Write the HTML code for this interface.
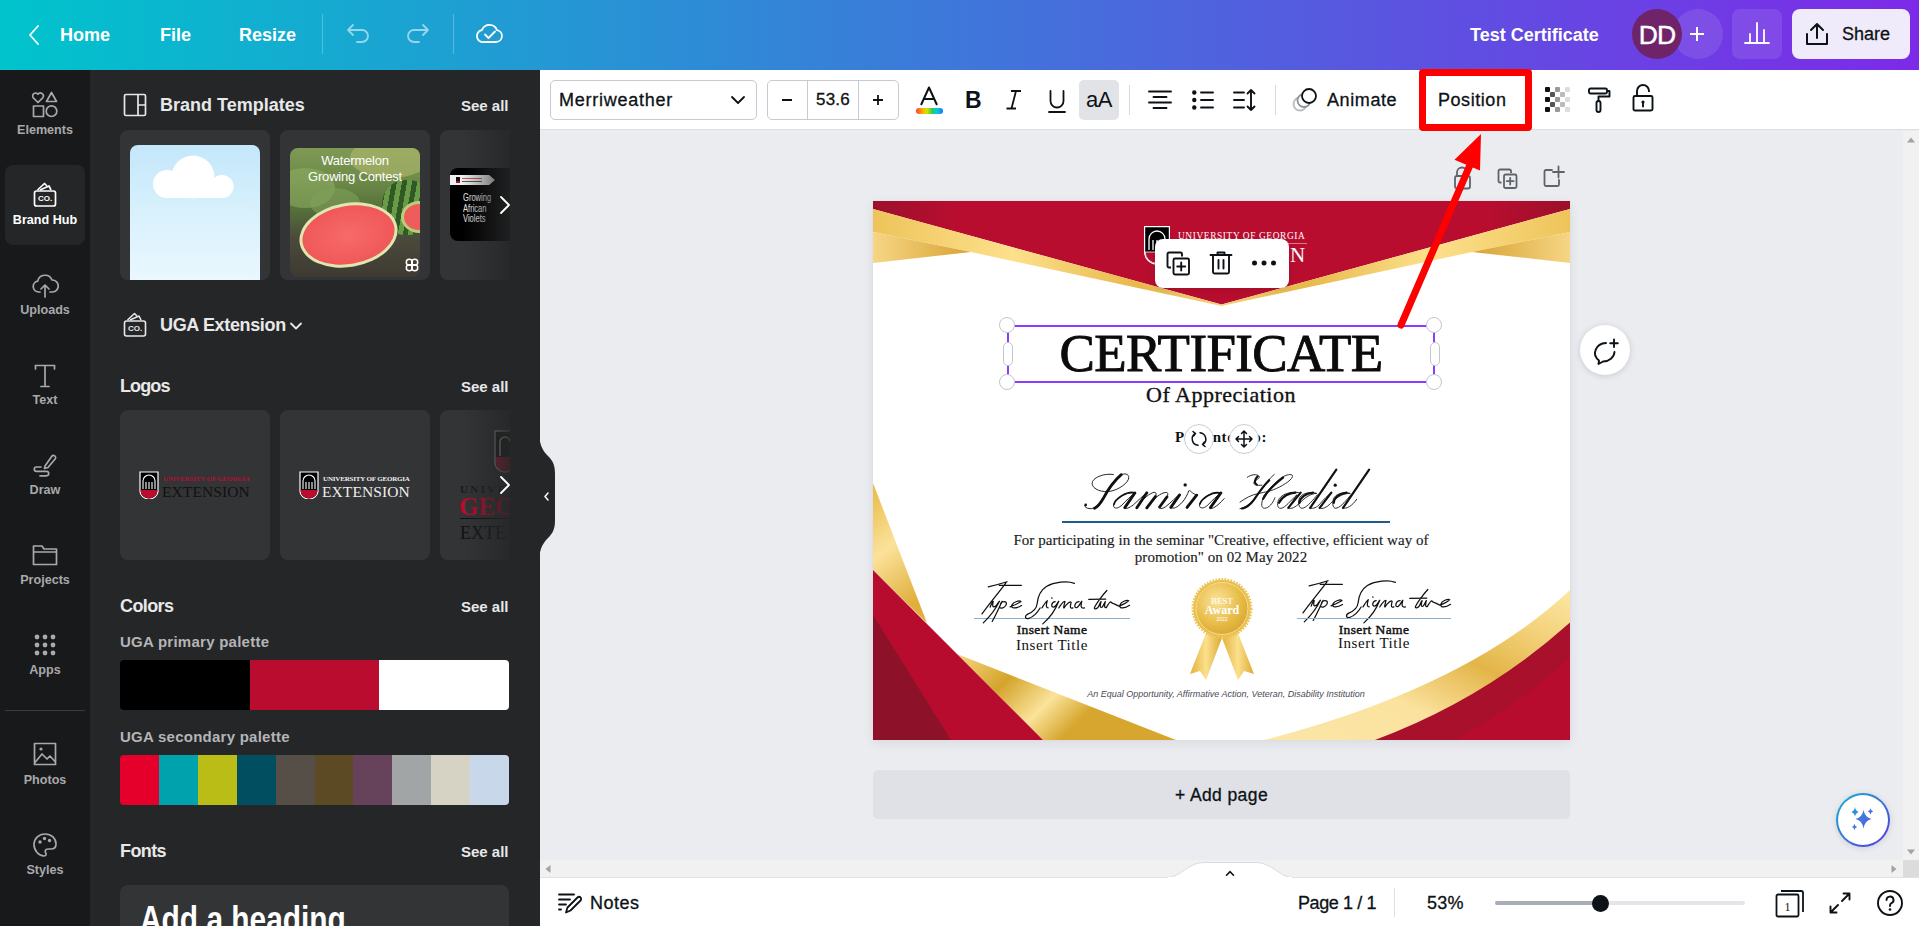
<!DOCTYPE html>
<html><head><meta charset="utf-8">
<style>
*{box-sizing:border-box;margin:0;padding:0}
html,body{width:1919px;height:926px;overflow:hidden;background:#ebecf0;font-family:"Liberation Sans",sans-serif}
.a{position:absolute}
.hdr{left:0;top:0;width:1919px;height:70px;background:linear-gradient(90deg,#00c4cc 0%,#7d2ae8 100%)}
.ht{color:#fff;font-weight:bold;font-size:18px;line-height:22px;white-space:nowrap}
.rail{left:0;top:70px;width:90px;height:856px;background:#18191b}
.ri{left:0;width:90px;text-align:center;color:#a8a9ab;font-weight:bold;font-size:12.6px;white-space:nowrap;margin-top:1px}
.panel{left:90px;top:70px;width:450px;height:856px;background:#252627;overflow:hidden}
.pt{color:#e8e8e9;font-weight:bold;font-size:18px;white-space:nowrap;line-height:20px}
.sa{color:#e8e8e9;font-weight:bold;font-size:15px;white-space:nowrap;line-height:21px}
.card{width:150px;height:150px;background:#333436;border-radius:8px;overflow:hidden}
.tb{left:540px;top:70px;width:1379px;height:60px;background:#fff;border-bottom:1px solid #dcdee3}
.tt{color:#0d1216;font-size:18px;white-space:nowrap;line-height:20px;-webkit-text-stroke:.3px #0d1216}
.bot{left:540px;top:877px;width:1379px;height:49px;background:#fff;border-top:1px solid #dfe1e5}
.serif{font-family:"Liberation Serif",serif}
</style></head><body>

<!-- HEADER -->
<div class="a hdr"></div>
<svg class="a" style="left:26px;top:24px" width="16" height="22" viewBox="0 0 16 22"><path d="M12 2 L4 11 L12 20" fill="none" stroke="#fff" stroke-width="1.8" stroke-linecap="round" stroke-linejoin="round"/></svg>
<div class="a ht" style="left:60px;top:24px">Home</div>
<div class="a ht" style="left:160px;top:24px">File</div>
<div class="a ht" style="left:239px;top:24px">Resize</div>
<div class="a" style="left:322px;top:14px;width:1px;height:40px;background:rgba(255,255,255,.25)"></div>
<svg class="a" style="left:346px;top:22px" width="26" height="22" viewBox="0 0 26 22"><path d="M7 3 L2 8 L7 13 M2 8 H16 a6 6 0 0 1 0 12 H11" fill="none" stroke="rgba(255,255,255,.55)" stroke-width="1.8" stroke-linecap="round" stroke-linejoin="round"/></svg>
<svg class="a" style="left:404px;top:22px" width="26" height="22" viewBox="0 0 26 22"><path d="M19 3 L24 8 L19 13 M24 8 H10 a6 6 0 0 0 0 12 H15" fill="none" stroke="rgba(255,255,255,.55)" stroke-width="1.8" stroke-linecap="round" stroke-linejoin="round"/></svg>
<div class="a" style="left:453px;top:14px;width:1px;height:40px;background:rgba(255,255,255,.25)"></div>
<svg class="a" style="left:476px;top:22px" width="28" height="22" viewBox="0 0 28 22"><path d="M8 20 H20 a6 6 0 0 0 1-11.9 A8 8 0 0 0 6 8 a6 6 0 0 0 2 12 Z" fill="none" stroke="#fff" stroke-width="1.8" stroke-linejoin="round"/><path d="M9 12.5 L12.5 16 L19 9.5" fill="none" stroke="#fff" stroke-width="1.8" stroke-linecap="round" stroke-linejoin="round"/></svg>

<div class="a ht" style="left:1470px;top:24px">Test Certificate</div>
<div class="a" style="left:1673px;top:9px;width:50px;height:50px;border-radius:50%;background:rgba(255,255,255,.1)"></div>
<div class="a" style="left:1632px;top:9px;width:50px;height:50px;border-radius:50%;background:#6f2368;color:#fff;font-size:26.5px;line-height:53px;text-align:center;letter-spacing:-.8px;-webkit-text-stroke:.4px #fff">DD</div>
<svg class="a" style="left:1689px;top:26px" width="16" height="16" viewBox="0 0 16 16"><path d="M8 1 V15 M1 8 H15" stroke="#fff" stroke-width="2"/></svg>
<div class="a" style="left:1732px;top:9px;width:50px;height:50px;border-radius:8px;background:rgba(255,255,255,.1)"></div>
<svg class="a" style="left:1744px;top:22px" width="26" height="22" viewBox="0 0 26 22"><path d="M1 21 H25 M6 21 V12 M13 21 V1 M20 21 V8" stroke="#fff" stroke-width="1.8" stroke-linecap="round"/></svg>
<div class="a" style="left:1792px;top:9px;width:118px;height:50px;border-radius:8px;background:#f0ebfb"></div>
<svg class="a" style="left:1805px;top:22px" width="24" height="24" viewBox="0 0 24 24"><path d="M2 12 V22 H22 V12 M12 16 V2 M6 8 L12 2 L18 8" fill="none" stroke="#0d1216" stroke-width="2" stroke-linecap="round" stroke-linejoin="round"/></svg>
<div class="a tt" style="left:1842px;top:24px;font-size:18px">Share</div>

<!-- RAIL -->
<div class="a rail"></div>
<!-- Elements -->
<svg class="a" style="left:31px;top:91px" width="28" height="28" viewBox="0 0 28 28" fill="none" stroke="#a8a9ab" stroke-width="1.7" stroke-linejoin="round">
<path d="M7 11.5 L2.3 6.8 a2.9 2.9 0 0 1 4.7-3.6 a2.9 2.9 0 0 1 4.7 3.6 Z"/>
<path d="M20.5 1.5 L25.5 10.5 H15.5 Z"/>
<rect x="2.5" y="15" width="10" height="10.5"/>
<circle cx="20.5" cy="20.2" r="5.3"/>
</svg>
<div class="a ri" style="top:120px;line-height:18px">Elements</div>
<!-- Brand hub -->
<div class="a" style="left:5px;top:165px;width:80px;height:80px;border-radius:8px;background:#252627"></div>
<svg class="a" style="left:33px;top:181px" width="24" height="27" viewBox="0 0 24 27" fill="none" stroke="#fff" stroke-width="1.7" stroke-linejoin="round">
<path d="M4.5 9 L11.5 2.5 L14 5"/><path d="M7 9 L16 5 L18 9"/>
<rect x="1.5" y="10" width="21" height="15" rx="2"/>
</svg>
<div class="a" style="left:33px;top:189px;width:24px;text-align:center;color:#fff;font:bold 8px 'Liberation Sans';line-height:10px;top:194px">CO.</div>
<div class="a ri" style="top:210px;line-height:18px;color:#fff">Brand Hub</div>
<!-- Uploads -->
<svg class="a" style="left:31px;top:272px" width="28" height="28" viewBox="0 0 28 28" fill="none" stroke="#a8a9ab" stroke-width="1.7" stroke-linecap="round" stroke-linejoin="round">
<path d="M9 20 H7.5 a5.5 5.5 0 0 1-.8-10.9 A7.5 7.5 0 0 1 21 8 a5.8 5.8 0 0 1 .5 12 H19"/>
<path d="M14 25 V13 M10 17 L14 13 L18 17"/>
</svg>
<div class="a ri" style="top:300px;line-height:18px">Uploads</div>
<!-- Text -->
<svg class="a" style="left:33px;top:363px" width="24" height="26" viewBox="0 0 24 26" fill="none" stroke="#a8a9ab" stroke-width="1.7" stroke-linecap="round">
<path d="M2.5 6 V2.5 H21.5 V6 M12 2.5 V23.5 M8 23.5 H16"/>
</svg>
<div class="a ri" style="top:390px;line-height:18px">Text</div>
<!-- Draw -->
<svg class="a" style="left:32px;top:452px" width="26" height="26" viewBox="0 0 26 26" fill="none" stroke="#a8a9ab" stroke-width="1.7" stroke-linecap="round" stroke-linejoin="round">
<path d="M13 14 L20 4 a2.2 2.2 0 0 1 3.5 2.5 L16 15.5 L12.5 16.5 Z"/>
<path d="M9 15 H4.5 a2.2 2.2 0 0 0 0 4.4 H14.5 a2.2 2.2 0 0 1 0 4.4 H8"/>
</svg>
<div class="a ri" style="top:480px;line-height:18px">Draw</div>
<!-- Projects -->
<svg class="a" style="left:31px;top:543px" width="28" height="24" viewBox="0 0 28 24" fill="none" stroke="#a8a9ab" stroke-width="1.7" stroke-linejoin="round">
<path d="M2.5 3 H11 L13 6 H25.5 V21.5 H2.5 Z M2.5 9 H25.5"/>
</svg>
<div class="a ri" style="top:570px;line-height:18px">Projects</div>
<!-- Apps -->
<svg class="a" style="left:33px;top:633px" width="24" height="24" viewBox="0 0 24 24" fill="#a8a9ab">
<circle cx="4" cy="4" r="2.4"/><circle cx="12" cy="4" r="2.4"/><circle cx="20" cy="4" r="2.4"/>
<circle cx="4" cy="12" r="2.4"/><circle cx="12" cy="12" r="2.4"/><circle cx="20" cy="12" r="2.4"/>
<circle cx="4" cy="20" r="2.4"/><circle cx="12" cy="20" r="2.4"/><circle cx="20" cy="20" r="2.4"/>
</svg>
<div class="a ri" style="top:660px;line-height:18px">Apps</div>
<div class="a" style="left:5px;top:710px;width:80px;height:1px;background:#3a3b3d"></div>
<!-- Photos -->
<svg class="a" style="left:33px;top:742px" width="24" height="24" viewBox="0 0 24 24" fill="none" stroke="#a8a9ab" stroke-width="1.7" stroke-linejoin="round">
<rect x="1.5" y="1.5" width="21" height="21"/><path d="M1.5 21 L9 12 L14 17 L17 14 L22.5 20"/><circle cx="8" cy="7" r="1.6" fill="#a8a9ab" stroke="none"/>
</svg>
<div class="a ri" style="top:770px;line-height:18px">Photos</div>
<!-- Styles -->
<svg class="a" style="left:32px;top:832px" width="26" height="26" viewBox="0 0 26 26" fill="none" stroke="#a8a9ab" stroke-width="1.7" stroke-linejoin="round">
<path d="M13 2 C6.5 2 2 6.8 2 12.5 C2 18.5 6.8 24 12 24 C14.2 24 14.6 22.5 13.6 20.8 C12.6 19 13.6 17 15.8 17 H19 C22 17 24 15 24 12 C24 6.5 19.5 2 13 2 Z"/>
<circle cx="8" cy="10" r="1.7" fill="#a8a9ab" stroke="none"/><circle cx="12.5" cy="6.5" r="1.7" fill="#a8a9ab" stroke="none"/><circle cx="17.5" cy="8.5" r="1.7" fill="#a8a9ab" stroke="none"/>
</svg>
<div class="a ri" style="top:860px;line-height:18px">Styles</div>


<!-- TOOLBAR -->
<div class="a tb"></div>
<div class="a" style="left:550px;top:80px;width:207px;height:40px;border:1px solid #c7cad0;border-radius:5px"></div>
<div class="a tt" style="left:559px;top:90px;font-size:18px;letter-spacing:.75px">Merriweather</div>
<svg class="a" style="left:730px;top:94px" width="16" height="12" viewBox="0 0 16 12"><path d="M2 3 L8 9 L14 3" fill="none" stroke="#0d1216" stroke-width="1.8" stroke-linecap="round" stroke-linejoin="round"/></svg>
<div class="a" style="left:767px;top:80px;width:132px;height:40px;border:1px solid #c7cad0;border-radius:5px"></div>
<div class="a" style="left:807px;top:81px;width:1px;height:38px;background:#c7cad0"></div>
<div class="a" style="left:858px;top:81px;width:1px;height:38px;background:#c7cad0"></div>
<div class="a" style="left:782px;top:99px;width:10px;height:2px;background:#0d1216"></div>
<div class="a tt" style="left:816px;top:90px;font-size:17px;letter-spacing:.2px">53.6</div>
<svg class="a" style="left:872px;top:94px" width="12" height="12" viewBox="0 0 12 12"><path d="M6 1 V11 M1 6 H11" stroke="#0d1216" stroke-width="1.8"/></svg>
<svg class="a" style="left:914px;top:86px" width="30" height="29" viewBox="0 0 30 29"><path d="M7 19 L15 1.5 L23 19 M10 13 H20" fill="none" stroke="#0d1216" stroke-width="2" stroke-linejoin="round"/><defs><linearGradient id="rb" x1="0" x2="1"><stop offset="0" stop-color="#ff3b2f"/><stop offset=".2" stop-color="#ff9f0a"/><stop offset=".4" stop-color="#d7e500"/><stop offset=".6" stop-color="#34c759"/><stop offset=".8" stop-color="#00c7f0"/><stop offset="1" stop-color="#1d6ff2"/></linearGradient></defs><rect x="2" y="22" width="27" height="6" rx="3" fill="url(#rb)"/></svg>
<div class="a" style="left:965px;top:88px;color:#0d1216;font:bold 23px 'Liberation Sans';line-height:24px">B</div>
<svg class="a" style="left:1005px;top:90px" width="18" height="20" viewBox="0 0 18 20"><path d="M6 1 H16 M1.5 18.5 H11 M11 1 L6.5 18.5" fill="none" stroke="#0d1216" stroke-width="1.8"/></svg>
<svg class="a" style="left:1048px;top:90px" width="18" height="24" viewBox="0 0 18 24"><path d="M2.5 1 V11 a6.5 6.5 0 0 0 13 0 V1 M1 22 H17" fill="none" stroke="#0d1216" stroke-width="1.8" stroke-linecap="round"/></svg>
<div class="a" style="left:1079px;top:80px;width:40px;height:40px;border-radius:5px;background:#e1e3e7"></div>
<div class="a" style="left:1079px;top:88px;width:40px;text-align:center;color:#0d1216;font-size:22px;line-height:24px;letter-spacing:-.5px">aA</div>
<div class="a" style="left:1129px;top:85px;width:1px;height:30px;background:#d7d9dd"></div>
<svg class="a" style="left:1148px;top:90px" width="24" height="20" viewBox="0 0 24 20" stroke="#0d1216" stroke-width="1.9" stroke-linecap="round"><path d="M1 1.5 H23 M5.5 7 H18.5 M1 12.5 H23 M5.5 18 H18.5"/></svg>
<svg class="a" style="left:1191px;top:89px" width="24" height="22" viewBox="0 0 24 22" stroke="#0d1216" stroke-width="1.9" stroke-linecap="round"><circle cx="3.3" cy="3.5" r="2.2" fill="#0d1216" stroke="none"/><circle cx="3.3" cy="11" r="2.2" fill="#0d1216" stroke="none"/><circle cx="3.3" cy="18.5" r="2.2" fill="#0d1216" stroke="none"/><path d="M10 3.5 H22 M10 11 H22 M10 18.5 H22"/></svg>
<svg class="a" style="left:1233px;top:88px" width="24" height="24" viewBox="0 0 24 24" stroke="#0d1216" stroke-width="1.9" stroke-linecap="round" stroke-linejoin="round" fill="none"><path d="M1 4.5 H11 M1 12 H11 M1 19.5 H11 M18 2 V22 M14.5 5.5 L18 2 L21.5 5.5 M14.5 18.5 L18 22 L21.5 18.5"/></svg>
<div class="a" style="left:1275px;top:85px;width:1px;height:30px;background:#d7d9dd"></div>
<svg class="a" style="left:1292px;top:86px" width="28" height="27" viewBox="0 0 28 27" fill="none" stroke-width="1.8"><circle cx="8" cy="18" r="6.5" stroke="#b9bcc1"/><circle cx="12" cy="14.5" r="6.5" stroke="#8e9297" fill="#fff"/><circle cx="17" cy="10" r="7" stroke="#0d1216" fill="#fff"/></svg>
<div class="a tt" style="left:1327px;top:90px;letter-spacing:.6px">Animate</div>
<div class="a tt" style="left:1438px;top:90px;letter-spacing:.55px">Position</div>
<div class="a" style="left:1419px;top:69px;width:113px;height:62px;border:7px solid #ff0000;border-radius:4px"></div>
<svg class="a" style="left:1545px;top:87px" width="26" height="26" viewBox="0 0 26 26">
<g fill="#111"><rect x="0" y="0" width="5" height="5" rx="1"/><rect x="0" y="10" width="5" height="5" rx="1"/><rect x="0" y="20" width="5" height="5" rx="1"/></g>
<g fill="#555"><rect x="5" y="5" width="5" height="5" rx="1"/><rect x="5" y="15" width="5" height="5" rx="1"/></g>
<g fill="#999"><rect x="10" y="0" width="5" height="5" rx="1"/><rect x="10" y="10" width="5" height="5" rx="1"/><rect x="10" y="20" width="5" height="5" rx="1"/></g>
<g fill="#bbb"><rect x="15" y="5" width="5" height="5" rx="1"/><rect x="15" y="15" width="5" height="5" rx="1"/></g>
<g fill="#ddd"><rect x="20" y="0" width="5" height="5" rx="1"/><rect x="20" y="10" width="5" height="5" rx="1"/><rect x="20" y="20" width="5" height="5" rx="1"/></g>
</svg>
<svg class="a" style="left:1588px;top:87px" width="24" height="26" viewBox="0 0 24 26" fill="none" stroke="#0d1216" stroke-width="1.9" stroke-linejoin="round"><rect x="1" y="1.5" width="18" height="5" rx="1.5"/><path d="M19 4 H21.5 V9.5 H10.5 V14"/><rect x="8.5" y="14" width="4" height="11" rx="2"/></svg>
<svg class="a" style="left:1632px;top:84px" width="22" height="28" viewBox="0 0 22 28" fill="none" stroke="#0d1216" stroke-width="1.9" stroke-linejoin="round"><path d="M5 12 V7 a6 6 0 0 1 12 0 V8"/><rect x="1.5" y="12" width="19" height="14.5" rx="1.5"/><circle cx="11" cy="18" r="1.6" fill="#0d1216" stroke="none"/><path d="M11 18 V22.5" stroke-linecap="round"/></svg>


<!-- CANVAS -->
<svg class="a" style="left:1453px;top:166px" width="20" height="24" viewBox="0 0 20 24" fill="none" stroke="#5f646b" stroke-width="1.8" stroke-linejoin="round"><path d="M4 10 V6.5 a5 5 0 0 1 10 0"/><rect x="2" y="10" width="15" height="12.5" rx="2"/></svg>
<svg class="a" style="left:1497px;top:168px" width="22" height="22" viewBox="0 0 22 22" fill="none" stroke="#5f646b" stroke-width="1.8" stroke-linejoin="round"><path d="M4.5 14.5 H3 a1.5 1.5 0 0 1-1.5-1.5 V3 A1.5 1.5 0 0 1 3 1.5 H12.5 A1.5 1.5 0 0 1 14 3 V5"/><rect x="7" y="6.5" width="12.5" height="13.5" rx="1.5"/><path d="M13.2 9.8 V16.6 M9.8 13.2 H16.6" stroke-linecap="round"/></svg>
<svg class="a" style="left:1543px;top:165px" width="22" height="23" viewBox="0 0 22 23" fill="none" stroke="#5f646b" stroke-width="1.8" stroke-linejoin="round" stroke-linecap="round"><path d="M9 5 H3 a1.5 1.5 0 0 0-1.5 1.5 V19.5 A1.5 1.5 0 0 0 3 21 H14.5 A1.5 1.5 0 0 0 16 19.5 V15"/><path d="M15.5 1.5 V12.5 M10 7 H21"/></svg>

<div class="a" style="left:873px;top:201px;width:697px;height:539px;background:#fff;box-shadow:0 3px 10px rgba(40,50,70,.09),0 0 2px rgba(40,50,70,.05)"></div>
<svg class="a" style="left:873px;top:201px" width="697" height="539" viewBox="0 0 697 539">
<defs>
 <linearGradient id="red" x1="0" x2="1"><stop offset="0" stop-color="#9c102c"/><stop offset=".12" stop-color="#b90d2f"/><stop offset=".88" stop-color="#b90d2f"/><stop offset="1" stop-color="#9c102c"/></linearGradient>
 <linearGradient id="g1" x1="0" x2="1"><stop offset="0" stop-color="#eec45a"/><stop offset=".2" stop-color="#fde08c"/><stop offset=".38" stop-color="#e7b84a"/><stop offset=".5" stop-color="#f3d27a"/><stop offset=".62" stop-color="#e7b84a"/><stop offset=".8" stop-color="#fde08c"/><stop offset="1" stop-color="#eec45a"/></linearGradient>
 <linearGradient id="g2" x1="0" y1="0" x2="1" y2="0"><stop offset="0" stop-color="#f6d684"/><stop offset="1" stop-color="#d8a233"/></linearGradient>
 <linearGradient id="g3" x1="1" y1="0" x2="0" y2="0"><stop offset="0" stop-color="#f6d684"/><stop offset="1" stop-color="#d8a233"/></linearGradient>
 <linearGradient id="gb" x1="0" y1="0" x2="1" y2=".4"><stop offset="0" stop-color="#f7d77f"/><stop offset=".3" stop-color="#d4a42c"/><stop offset=".55" stop-color="#fbe39a"/><stop offset=".75" stop-color="#d6a62e"/><stop offset="1" stop-color="#d6a62e"/></linearGradient>
 <linearGradient id="gl" x1="0" y1="0" x2=".3" y2="1"><stop offset="0" stop-color="#e9b944"/><stop offset=".5" stop-color="#fbe29a"/><stop offset="1" stop-color="#e0ae3a"/></linearGradient>
 <linearGradient id="gr" x1="0" y1="1" x2="1" y2="0"><stop offset="0" stop-color="#fbe6a8"/><stop offset=".35" stop-color="#fbe29e"/><stop offset=".6" stop-color="#e3b548"/><stop offset=".8" stop-color="#f3d17a"/><stop offset="1" stop-color="#fde7a4"/></linearGradient>
</defs>
<polygon points="0,0 697,0 697,8 348.5,103.5 0,8" fill="url(#red)"/>
<polygon points="0,8 348.5,103.5 697,8 697,31 599,51 348.5,105 98,51 0,31" fill="url(#g1)"/>
<polygon points="0,31 98,51 0,62" fill="url(#g2)"/>
<polygon points="697,31 599,51 697,62" fill="url(#g3)"/>
<!-- bottom left -->
<polygon points="0,282 54,422 0,369" fill="url(#gl)"/>
<polygon points="84,453 303,539 170,539" fill="url(#gb)"/>
<polygon points="0,369 170,539 0,539" fill="#b80c2f"/>
<polygon points="0,414 78,539 0,539" fill="#8d1129"/>
<!-- bottom right -->
<path d="M391 539 Q593 487 697 389 V539 Z" fill="url(#gr)"/>
<path d="M502 539 Q612 498 697 421.6 V539 Z" fill="#a8102c"/>
<path d="M583 539 Q650 500 697 456 V539 Z" fill="#b80c2f"/>
<!-- logo -->
<g transform="translate(271,25)">
 <path d="M0.6 0.6 H25.4 V26 a12.4 12 0 0 1-24.8 0 Z" fill="#000" stroke="#fff" stroke-width="1.2"/>
 <path d="M1.2 26 H24.8 a11.8 11.4 0 0 1-23.6 0 Z" fill="#b50d2f" stroke="#fff" stroke-width=".8"/>
 <path d="M5 24 V13 a8 8 0 0 1 16 0 V24 M9 24 V14 M13 24 V14 M17 24 V14" fill="none" stroke="#fff" stroke-width="1.3"/>
</g>
</svg>
<div class="a serif" style="left:1178px;top:230px;color:#fff;font-size:9.4px;line-height:12px;white-space:nowrap;letter-spacing:.6px">UNIVERSITY OF GEORGIA</div>
<div class="a" style="left:1178px;top:243px;width:129px;height:1px;background:rgba(255,255,255,.45)"></div>
<div class="a serif" style="left:1177px;top:244px;color:#fff;font-size:21px;line-height:22px;white-space:nowrap;letter-spacing:1.3px">EXTENSION</div>

<!-- texts -->
<div class="a serif" style="left:1000px;top:323px;width:442px;text-align:center;color:#0b0b0b;font-size:53px;line-height:60px;white-space:nowrap;letter-spacing:-.6px;-webkit-text-stroke:.9px #0b0b0b">CERTIFICATE</div>
<div class="a serif" style="left:1071px;top:382px;width:300px;text-align:center;color:#111;font-size:22px;line-height:26px;white-space:nowrap;letter-spacing:.5px;-webkit-text-stroke:.35px #111">Of Appreciation</div>
<div class="a serif" style="left:1121px;top:428px;width:200px;text-align:center;color:#111;font-size:15px;line-height:18px;white-space:nowrap;letter-spacing:.6px;font-weight:bold">Presented to:</div>
<svg class="a" style="left:1075px;top:462px" width="300" height="54" viewBox="0 0 3600 648">
<g fill="none" stroke="#111" stroke-linecap="round" stroke-linejoin="round">
<path d="M460 150 C350 130 200 190 205 260 C210 330 330 370 430 350 C530 330 640 250 645 190 C650 140 590 130 540 160 C450 230 380 350 330 450 C280 530 230 560 180 560 C120 555 100 520 130 510 M715 372 C610 352 475 445 463 515 C455 565 515 565 565 515 C610 468 680 400 720 370 L595 550 C610 570 650 550 700 515 C760 460 820 400 860 370 M760 520 C820 440 900 370 950 365 C985 362 975 400 960 430 M880 520 C940 440 1030 370 1090 365 C1125 362 1115 400 1100 430 L1015 540 C1005 565 1050 565 1090 535 C1160 480 1210 420 1250 395 M1150 545 C1180 570 1230 545 1290 480 C1330 430 1350 390 1365 345 C1380 330 1400 380 1460 395 M1740 375 C1650 345 1510 440 1495 505 C1485 565 1545 565 1595 515 C1645 465 1710 400 1750 370 L1625 550 C1640 570 1700 540 1790 440 " stroke-width="11"/>
<path d="M555 152 C470 225 390 340 335 445 C300 505 270 540 235 555 M718 372 L598 548 M862 370 L742 550 M965 415 L862 550 M1103 420 L1015 540 M1255 395 L1150 545 M1460 398 L1345 545 M1750 372 L1625 548" stroke-width="34"/>
<path d="M700 366 C612 358 484 440 468 508 M1732 370 C1650 350 1518 440 1500 503" stroke-width="20"/>
<circle cx="1322" cy="275" r="20" fill="#111" stroke="none"/>
<circle cx="128" cy="515" r="16" fill="#111" stroke="none"/>
</g></svg>
<svg class="a" style="left:1240px;top:462px;overflow:visible" width="140" height="54" viewBox="0 0 1919 740"><g fill="none" stroke="#111" stroke-linecap="round" stroke-linejoin="round"><path d="M100 210 C150 170 230 160 262 195 C285 225 200 250 190 280 C185 310 220 325 300 318 M470 170 C400 230 320 320 260 420 C200 520 100 620 0 640 M0 550 C80 490 160 450 260 430 C360 410 400 400 460 380 C560 340 700 260 720 200 C730 160 650 160 560 220 C480 280 400 360 330 460 M330 460 C270 600 300 650 360 630 C420 610 460 540 478 490 M830 425 C740 400 600 420 540 500 C500 560 510 640 560 635 C620 630 700 520 780 450 L660 630 C700 650 760 620 820 560 C900 480 960 440 1040 430 M1050 430 C960 400 830 430 810 510 C790 590 820 650 870 630 C930 610 1000 520 1060 450 M960 630 C1000 650 1060 620 1100 570 C1150 510 1200 460 1250 420 L1090 630 C1130 650 1190 620 1240 570 C1300 500 1400 430 1500 430 M1510 430 C1420 400 1300 440 1280 510 C1260 590 1280 650 1330 630 C1390 610 1460 520 1520 450 M1410 630 C1460 650 1540 600 1600 510" stroke-width="12"/><path d="M240 200 C200 240 190 290 230 310 M400 250 C330 320 250 430 190 520 C140 590 90 625 30 638 M590 215 C480 300 360 420 318 505 M760 420 C680 420 575 470 535 560 M832 420 L662 628 M1000 420 C905 430 825 480 815 560 M1320 105 L962 628 M1252 420 L1092 628 M1460 420 C1370 430 1292 480 1285 560 M1770 105 L1412 628" stroke-width="30"/><circle cx="1305" cy="318" r="22" fill="#111" stroke="none"/></g></svg>
<div class="a" style="left:1062px;top:521px;width:328px;height:2px;background:#1f5c8c"></div>
<div class="a serif" style="left:971px;top:532px;width:500px;text-align:center;color:#1b1b1b;font-size:15px;line-height:16.5px;letter-spacing:.05px;-webkit-text-stroke:.15px #1b1b1b">For participating in the seminar "Creative, effective, efficient way of<br>promotion" on 02 May 2022</div>
<div class="a" style="left:974px;top:618px;width:156px;height:1px;background:#8fb0cc"></div>
<svg class="a" style="left:970px;top:575px" width="170" height="55" viewBox="0 0 1919 621"><path d="M205 135 Q300 112 418 76 M330 118 L580 116 M405 88 C340 180 210 330 135 440 M228 362 C240 330 252 302 262 298 C252 340 250 378 292 350 C312 322 322 302 332 296 C292 382 222 470 150 540 M362 298 C322 380 292 450 250 525 M345 318 C385 288 425 300 405 342 C388 372 352 382 332 368 M452 360 C502 340 560 312 576 300 C560 284 492 300 472 340 C456 380 522 382 582 345 M1178 95 C1100 62 950 80 862 130 C782 182 765 252 758 322 C752 382 702 422 652 442 C612 462 622 500 662 490 C722 470 762 422 792 372 M812 372 C832 340 852 302 872 290 C862 330 852 372 882 370 M922 258 L926 262 M962 300 C922 300 902 372 952 360 C982 340 992 302 1002 296 C962 402 902 482 822 552 M1002 372 C1032 322 1062 292 1072 300 C1062 340 1052 372 1062 372 C1092 322 1132 292 1142 310 C1132 350 1122 382 1162 372 M1232 300 C1182 300 1162 382 1212 365 C1242 340 1252 302 1262 296 C1252 340 1242 382 1292 372 M1545 175 C1500 222 1420 330 1405 368 C1398 392 1428 385 1448 362 M1340 275 L1532 273 M1448 362 C1462 332 1472 306 1480 300 C1468 340 1462 378 1494 362 C1510 336 1520 310 1528 300 C1516 342 1514 378 1540 366 M1540 366 C1556 336 1570 312 1584 304 C1594 300 1598 316 1612 320 C1636 326 1656 342 1682 352 M1682 352 C1732 332 1782 302 1792 290 C1772 280 1702 300 1692 340 C1682 382 1742 382 1802 342" fill="none" stroke="#111" stroke-width="14" stroke-linecap="round" stroke-linejoin="round"/></svg>
<svg class="a" style="left:1291px;top:574px" width="170" height="55" viewBox="0 0 1919 621"><path d="M205 135 Q300 112 418 76 M330 118 L580 116 M405 88 C340 180 210 330 135 440 M228 362 C240 330 252 302 262 298 C252 340 250 378 292 350 C312 322 322 302 332 296 C292 382 222 470 150 540 M362 298 C322 380 292 450 250 525 M345 318 C385 288 425 300 405 342 C388 372 352 382 332 368 M452 360 C502 340 560 312 576 300 C560 284 492 300 472 340 C456 380 522 382 582 345 M1178 95 C1100 62 950 80 862 130 C782 182 765 252 758 322 C752 382 702 422 652 442 C612 462 622 500 662 490 C722 470 762 422 792 372 M812 372 C832 340 852 302 872 290 C862 330 852 372 882 370 M922 258 L926 262 M962 300 C922 300 902 372 952 360 C982 340 992 302 1002 296 C962 402 902 482 822 552 M1002 372 C1032 322 1062 292 1072 300 C1062 340 1052 372 1062 372 C1092 322 1132 292 1142 310 C1132 350 1122 382 1162 372 M1232 300 C1182 300 1162 382 1212 365 C1242 340 1252 302 1262 296 C1252 340 1242 382 1292 372 M1545 175 C1500 222 1420 330 1405 368 C1398 392 1428 385 1448 362 M1340 275 L1532 273 M1448 362 C1462 332 1472 306 1480 300 C1468 340 1462 378 1494 362 C1510 336 1520 310 1528 300 C1516 342 1514 378 1540 366 M1540 366 C1556 336 1570 312 1584 304 C1594 300 1598 316 1612 320 C1636 326 1656 342 1682 352 M1682 352 C1732 332 1782 302 1792 290 C1772 280 1702 300 1692 340 C1682 382 1742 382 1802 342" fill="none" stroke="#111" stroke-width="14" stroke-linecap="round" stroke-linejoin="round"/></svg>

<div class="a serif" style="left:992px;top:623px;width:120px;text-align:center;color:#111;font-size:13.5px;line-height:14px;white-space:nowrap;letter-spacing:.4px;-webkit-text-stroke:.45px #111">Insert Name</div>
<div class="a serif" style="left:992px;top:636px;width:120px;text-align:center;color:#111;font-size:15px;line-height:18px;white-space:nowrap;letter-spacing:.54px">Insert Title</div>
<div class="a" style="left:1297px;top:618px;width:154px;height:1px;background:#8fb0cc"></div>
<div class="a serif" style="left:1314px;top:623px;width:120px;text-align:center;color:#111;font-size:13.5px;line-height:14px;white-space:nowrap;letter-spacing:.4px;-webkit-text-stroke:.45px #111">Insert Name</div>
<div class="a serif" style="left:1314px;top:634px;width:120px;text-align:center;color:#111;font-size:15px;line-height:18px;white-space:nowrap;letter-spacing:.54px">Insert Title</div>
<div class="a" style="left:1026px;top:688px;width:400px;text-align:center;color:#4a4a55;font-size:9px;line-height:12px;white-space:nowrap;font-style:italic">An Equal Opportunity, Affirmative Action, Veteran, Disability Institution</div>
<!-- award -->
<svg class="a" style="left:1186px;top:576px" width="72" height="106" viewBox="0 0 72 106">
<defs>
 <radialGradient id="med" cx=".4" cy=".35" r=".7"><stop offset="0" stop-color="#fbe39a"/><stop offset=".6" stop-color="#e9bf4d"/><stop offset="1" stop-color="#d9a531"/></radialGradient>
 <linearGradient id="rib" x1="0" x2="1"><stop offset="0" stop-color="#e2b13c"/><stop offset=".5" stop-color="#fbe08c"/><stop offset="1" stop-color="#dcaa33"/></linearGradient>
</defs>
<path d="M22 52 L4 98 L14 95 L20 104 L36 62 Z" fill="url(#rib)"/>
<path d="M50 52 L68 98 L58 95 L52 104 L36 62 Z" fill="url(#rib)"/>
<circle cx="36" cy="32.5" r="28.8" fill="#e8bd4a" stroke="#ecc458" stroke-width="3.4" stroke-dasharray="1.6 1.4"/>
<circle cx="36" cy="32.5" r="26" fill="url(#med)" stroke="#f7dc8c" stroke-width="1"/>
<text x="36" y="28" text-anchor="middle" font-family="Liberation Serif" font-size="9" fill="#fff">BEST</text>
<text x="36" y="38" text-anchor="middle" font-family="Liberation Serif" font-size="12" font-weight="bold" fill="#fff">Award</text>
<text x="36" y="45" text-anchor="middle" font-family="Liberation Sans" font-size="5" fill="#fff">2022</text>
</svg>

<!-- selection -->
<div class="a" style="left:1007px;top:325px;width:428px;height:58px;border:2px solid #8b3dff"></div>
<div class="a" style="left:999px;top:317px;width:16px;height:16px;border-radius:50%;background:#fff;border:1px solid #c3c6cc"></div>
<div class="a" style="left:1426px;top:317px;width:16px;height:16px;border-radius:50%;background:#fff;border:1px solid #c3c6cc"></div>
<div class="a" style="left:999px;top:374px;width:16px;height:16px;border-radius:50%;background:#fff;border:1px solid #c3c6cc"></div>
<div class="a" style="left:1426px;top:374px;width:16px;height:16px;border-radius:50%;background:#fff;border:1px solid #c3c6cc"></div>
<div class="a" style="left:1003px;top:342px;width:10px;height:24px;border-radius:5px;background:#fff;border:1px solid #c3c6cc"></div>
<div class="a" style="left:1430px;top:342px;width:10px;height:24px;border-radius:5px;background:#fff;border:1px solid #c3c6cc"></div>
<!-- rotate / move -->
<div class="a" style="left:1184px;top:424px;width:30px;height:30px;border-radius:50%;background:#fff;border:1px solid #c9ccd1"></div>
<svg class="a" style="left:1189px;top:429px" width="20" height="20" viewBox="0 0 20 20" fill="none" stroke="#0d1216" stroke-width="1.5" stroke-linecap="round" stroke-linejoin="round"><path d="M6 4.5 A6.5 6.5 0 0 0 9 16.3 M14 15.5 A6.5 6.5 0 0 0 11 3.7 M4 2.5 L6.5 4.6 L4.6 7 M16 17.5 L13.5 15.4 L15.4 13"/></svg>
<div class="a" style="left:1229px;top:424px;width:30px;height:30px;border-radius:50%;background:#fff;border:1px solid #c9ccd1"></div>
<svg class="a" style="left:1234px;top:429px" width="20" height="20" viewBox="0 0 20 20" fill="none" stroke="#0d1216" stroke-width="1.5" stroke-linecap="round" stroke-linejoin="round"><path d="M10 2 V18 M2 10 H18 M7.5 4.5 L10 2 L12.5 4.5 M7.5 15.5 L10 18 L12.5 15.5 M4.5 7.5 L2 10 L4.5 12.5 M15.5 7.5 L18 10 L15.5 12.5"/></svg>

<!-- floating toolbar -->
<div class="a" style="left:1155px;top:239px;width:134px;height:49px;border-radius:8px;background:#fff;box-shadow:0 2px 8px rgba(0,0,0,.12)"></div>
<svg class="a" style="left:1166px;top:251px" width="26" height="25" viewBox="0 0 26 25" fill="none" stroke="#0d1216" stroke-width="1.9" stroke-linejoin="round"><path d="M5 16.5 H3 a1.5 1.5 0 0 1-1.5-1.5 V3 A1.5 1.5 0 0 1 3 1.5 H14.5 A1.5 1.5 0 0 1 16 3 V5.5"/><rect x="7.5" y="7.5" width="15.5" height="16" rx="1.5"/><path d="M15.2 11.5 V19.5 M11.2 15.5 H19.2" stroke-linecap="round"/></svg>
<svg class="a" style="left:1209px;top:250px" width="24" height="25" viewBox="0 0 24 25" fill="none" stroke="#0d1216" stroke-width="1.9" stroke-linejoin="round" stroke-linecap="round"><path d="M1.5 5 H22.5 M8.5 5 V2.5 H15.5 V5 M4 5 V22 a1.5 1.5 0 0 0 1.5 1.5 H18.5 A1.5 1.5 0 0 0 20 22 V5 M9.5 10 V18.5 M14.5 10 V18.5"/></svg>
<svg class="a" style="left:1251px;top:259px" width="26" height="8" viewBox="0 0 26 8" fill="#0d1216"><circle cx="3.5" cy="4" r="2.5"/><circle cx="13" cy="4" r="2.5"/><circle cx="22.5" cy="4" r="2.5"/></svg>

<!-- comment btn -->
<div class="a" style="left:1580px;top:325px;width:50px;height:50px;border-radius:50%;background:#fff;box-shadow:0 1px 6px rgba(0,0,0,.15)"></div>
<svg class="a" style="left:1591px;top:338px" width="30" height="28" viewBox="0 0 30 28" fill="none" stroke="#0d1216" stroke-width="1.9" stroke-linejoin="round" stroke-linecap="round"><path d="M15 5 A11.5 10 0 0 0 8 22.5 L7.5 26 L12 23.5 A11.5 10 0 0 0 23.5 14"/><path d="M23 1.5 V9 M19.2 5.2 H26.8"/></svg>

<!-- add page -->
<div class="a" style="left:873px;top:770px;width:697px;height:49px;border-radius:5px;background:#dfe1e6"></div>
<div class="a tt" style="left:873px;top:785px;width:697px;text-align:center;font-size:17.5px;letter-spacing:.4px">+ Add page</div>
<!-- magic -->
<div class="a" style="left:1836px;top:793px;width:54px;height:54px;border-radius:50%;background:linear-gradient(135deg,#14b5d0,#5a32e6);box-shadow:0 1px 6px rgba(0,0,0,.12)"></div>
<div class="a" style="left:1838px;top:795px;width:50px;height:50px;border-radius:50%;background:#fff"></div>
<svg class="a" style="left:1847px;top:804px" width="32" height="32" viewBox="-1 -1 30 30"><defs><linearGradient id="sp" x1="0" y1="0" x2="1" y2="1"><stop offset="0" stop-color="#1aa3cf"/><stop offset="1" stop-color="#6a4de8"/></linearGradient></defs><path d="M14.5 4.5 Q15.5 11.5 22 13 Q15.5 14.5 14.5 22 Q13.5 14.5 7 13 Q13.5 11.5 14.5 4.5 Z M6.5 1.5 Q7 5.5 10 6.5 Q7 7.5 6.5 11 Q6 7.5 3 6.5 Q6 5.5 6.5 1.5 Z M21 3 Q21.4 5.4 23.5 6 Q21.4 6.6 21 9 Q20.6 6.6 18.5 6 Q20.6 5.4 21 3 Z M6 17.5 Q6.4 19.9 8.5 20.5 Q6.4 21.1 6 23.5 Q5.6 21.1 3.5 20.5 Q5.6 19.9 6 17.5 Z" fill="url(#sp)"/></svg>

<!-- red arrow -->
<svg class="a" style="left:1380px;top:125px" width="120" height="220" viewBox="0 0 120 220"><path d="M21 200 L90 40" stroke="#ff0000" stroke-width="7" stroke-linecap="round"/><polygon points="101,9 74.5,34.8 100,45.6" fill="#ff0000"/></svg>

<!-- right scrollbar -->
<div class="a" style="left:1903px;top:131px;width:16px;height:729px;background:#f1f1f1"></div>
<svg class="a" style="left:1906px;top:136px" width="10" height="8" viewBox="0 0 10 8"><path d="M1 6.5 L5 1.5 L9 6.5 Z" fill="#a3a3a3"/></svg>
<svg class="a" style="left:1906px;top:848px" width="10" height="8" viewBox="0 0 10 8"><path d="M1 1.5 L5 6.5 L9 1.5 Z" fill="#a3a3a3"/></svg>
<!-- bottom scrollbar -->
<div class="a" style="left:540px;top:860px;width:1363px;height:17px;background:#f1f1f1"></div>
<div class="a" style="left:1903px;top:860px;width:16px;height:17px;background:#dcdcdc"></div>
<svg class="a" style="left:544px;top:864px" width="8" height="10" viewBox="0 0 8 10"><path d="M6.5 1 L1.5 5 L6.5 9 Z" fill="#a3a3a3"/></svg>
<svg class="a" style="left:1890px;top:864px" width="8" height="10" viewBox="0 0 8 10"><path d="M1.5 1 L6.5 5 L1.5 9 Z" fill="#a3a3a3"/></svg>

<!-- BOTTOM BAR -->
<div class="a bot"></div>
<svg class="a" style="left:1168px;top:862px" width="124" height="16" viewBox="0 0 124 16"><path d="M0 15.5 C12 15.5 20 0.5 36 0.5 H88 C104 0.5 112 15.5 124 15.5" fill="#fff" stroke="#d9dbe0" stroke-width="1"/><rect x="0" y="15" width="124" height="2" fill="#fff"/><path d="M58.5 13.2 L62 9.7 L65.5 13.2" fill="none" stroke="#0d1216" stroke-width="1.6" stroke-linecap="round"/></svg>
<svg class="a" style="left:558px;top:893px" width="26" height="21" viewBox="0 0 26 21" fill="none" stroke="#0d1216" stroke-width="1.8" stroke-linecap="round" stroke-linejoin="round"><path d="M1 1.5 H16 M1 6.5 H12 M1 11.5 H8 M1 16.5 H3"/><path d="M8 19.5 L9.5 14.5 L19.5 4.5 a2 2 0 0 1 3 3 L12.5 17.5 Z"/></svg>
<div class="a tt" style="left:590px;top:893px;letter-spacing:.5px">Notes</div>
<div class="a tt" style="left:1298px;top:893px;letter-spacing:-.4px">Page 1 / 1</div>
<div class="a" style="left:1394px;top:888px;width:1px;height:29px;background:#dfe1e5"></div>
<div class="a tt" style="left:1427px;top:893px;letter-spacing:.3px">53%</div>
<div class="a" style="left:1495px;top:901px;width:250px;height:4px;border-radius:2px;background:#e3e5e8"></div>
<div class="a" style="left:1495px;top:901px;width:106px;height:4px;border-radius:2px;background:#a9adb5"></div>
<div class="a" style="left:1592px;top:895px;width:17px;height:17px;border-radius:50%;background:#0d1216"></div>
<svg class="a" style="left:1775px;top:889px" width="30" height="29" viewBox="0 0 30 29" fill="none" stroke="#0d1216" stroke-width="1.8"><rect x="1.5" y="5.5" width="22" height="22" rx="1.5"/><path d="M6 2 H26.5 a1.5 1.5 0 0 1 1.5 1.5 V23"/><text x="12.5" y="22" font-family="Liberation Serif" font-size="12" text-anchor="middle" fill="#0d1216" stroke="none">1</text></svg>
<svg class="a" style="left:1828px;top:891px" width="24" height="24" viewBox="0 0 24 24" fill="none" stroke="#0d1216" stroke-width="1.9" stroke-linecap="round" stroke-linejoin="round"><path d="M14 10 L21.5 2.5 M15.5 2.5 H21.5 V8.5 M10 14 L2.5 21.5 M2.5 15.5 V21.5 H8.5"/></svg>
<svg class="a" style="left:1876px;top:889px" width="28" height="28" viewBox="0 0 28 28" fill="none" stroke="#0d1216" stroke-width="1.9" stroke-linecap="round"><circle cx="14" cy="14" r="12"/><path d="M10.5 11 a3.5 3.5 0 1 1 5 3.2 c-1 .5-1.5 1.2-1.5 2.3 V17"/><circle cx="14" cy="20.5" r="1.3" fill="#0d1216" stroke="none"/></svg>

<!-- PANEL -->
<div class="a panel"></div>
<div class="a" style="left:0;top:0;width:540px;height:926px;overflow:hidden">
<svg class="a" style="left:123px;top:93px" width="24" height="24" viewBox="0 0 24 24" fill="none" stroke="#e8e8e9" stroke-width="1.7"><rect x="1.5" y="1.5" width="21" height="21" rx="1.5"/><path d="M15 1.5 V22.5 M15 12 H22.5"/></svg>
<div class="a pt" style="left:160px;top:95px">Brand Templates</div>
<div class="a sa" style="left:461px;top:95px">See all</div>
<!-- template cards -->
<div class="a card" style="left:120px;top:130px">
  <div class="a" style="left:10px;top:15px;width:130px;height:140px;border-radius:8px 8px 0 0;background:linear-gradient(180deg,#c4e7fb 0%,#d9f1fc 50%,#ebf8fe 100%)"></div>
  <svg class="a" style="left:32px;top:25px" width="82" height="44" viewBox="0 0 82 44"><g fill="#fff"><circle cx="15" cy="29" r="14"/><circle cx="41" cy="22" r="21.5"/><circle cx="70" cy="31.5" r="11.5"/><rect x="15" y="28" width="55" height="15"/></g></svg>
</div>
<div class="a card" style="left:280px;top:130px">
  <div class="a" style="left:10px;top:18px;width:130px;height:129px;border-radius:8px;overflow:hidden;background:linear-gradient(180deg,#7f9a55 0%,#6d8a48 25%,#55703a 48%,#4a4a3a 70%,#3e3a33 100%)">
    <div class="a" style="left:60px;top:-10px;width:80px;height:40px;border-radius:50%;background:#a9b469;opacity:.7"></div>
    <div class="a" style="left:-15px;top:20px;width:60px;height:40px;border-radius:50%;background:#8fae62;opacity:.55"></div>
    <div class="a" style="left:20px;top:40px;width:50px;height:30px;border-radius:50%;background:#7fa05a;opacity:.6"></div>
    <div class="a" style="left:92px;top:32px;width:50px;height:55px;border-radius:45%;background:repeating-linear-gradient(100deg,#2f5a25 0 5px,#6a9a45 5px 10px)"></div>
    <div class="a" style="left:9px;top:55px;width:99px;height:64px;border-radius:50%;background:#dfe6b0;transform:rotate(-10deg)"></div>
    <div class="a" style="left:12px;top:58px;width:93px;height:58px;border-radius:50%;background:radial-gradient(ellipse,#f76a6a 0%,#f05858 70%,#e44d4d 100%);transform:rotate(-10deg)"></div>
    <div class="a" style="left:111px;top:53px;width:36px;height:32px;border-radius:50%;background:#ee5c5c;border:3px solid #b8cf7a"></div>
    <div class="a" style="left:0;top:5px;width:130px;text-align:center;color:#fff;font-size:13px;line-height:15.5px;letter-spacing:-.2px">Watermelon<br>Growing Contest</div>
    <svg class="a" style="left:115px;top:110px" width="14" height="14" viewBox="0 0 14 14" fill="none" stroke="#fff" stroke-width="1.5"><circle cx="4.3" cy="4.3" r="3"/><circle cx="9.7" cy="4.3" r="3"/><circle cx="4.3" cy="9.7" r="3"/><circle cx="9.7" cy="9.7" r="3"/></svg>
  </div>
</div>
<div class="a card" style="left:440px;top:130px;width:150px">
  <div class="a" style="left:10px;top:38px;width:80px;height:73px;border-radius:8px;background:#000"></div>
  <div class="a" style="left:10px;top:45px;width:45px;height:10px;background:#f0f0f0;clip-path:polygon(0 0,87% 0,100% 50%,87% 100%,0 100%)"></div>
  <div class="a" style="left:16px;top:47px;width:4px;height:6px;background:#111;border-bottom:2px solid #ba0c2f"></div>
  <div class="a" style="left:22px;top:50.5px;width:20px;height:1.5px;background:#555"></div><div class="a" style="left:22px;top:47.5px;width:20px;height:1px;background:#c55"></div>
  <div class="a" style="left:23px;top:62px;color:#f2f2f2;font-size:10.5px;line-height:10.5px;transform:scaleX(.72);transform-origin:0 0">Growing<br>African<br>Violets</div>
</div>
<div class="a" style="left:430px;top:130px;width:80px;height:150px;background:linear-gradient(90deg,rgba(37,38,39,0) 0%,rgba(37,38,39,0) 40%,rgba(37,38,39,.85) 100%)"></div>
<div class="a" style="left:510px;top:130px;width:30px;height:150px;background:#252627"></div>
<svg class="a" style="left:498px;top:195px" width="14" height="20" viewBox="0 0 14 20"><path d="M3 2 L11 10 L3 18" fill="none" stroke="#fff" stroke-width="1.8" stroke-linecap="round" stroke-linejoin="round"/></svg>

<!-- UGA Extension -->
<svg class="a" style="left:122px;top:311px" width="26" height="27" viewBox="0 0 24 27" fill="none" stroke="#e8e8e9" stroke-width="1.6" stroke-linejoin="round">
<path d="M4.5 9 L11.5 2.5 L14 5"/><path d="M7 9 L16 5 L18 9"/>
<rect x="1.5" y="10" width="21" height="15" rx="2"/>
</svg>
<div class="a" style="left:123px;top:324px;width:24px;text-align:center;color:#e8e8e9;font:bold 8px 'Liberation Sans';line-height:10px">CO.</div>
<div class="a pt" style="left:160px;top:315px;letter-spacing:-.35px">UGA Extension</div>
<svg class="a" style="left:289px;top:321px" width="14" height="10" viewBox="0 0 14 10"><path d="M2 2.5 L7 7.5 L12 2.5" fill="none" stroke="#e8e8e9" stroke-width="1.8" stroke-linecap="round" stroke-linejoin="round"/></svg>

<!-- Logos -->
<div class="a pt" style="left:120px;top:376px;letter-spacing:-.9px">Logos</div>
<div class="a sa" style="left:461px;top:376px">See all</div>
<div class="a card" style="left:120px;top:410px">
  <svg class="a" style="left:19px;top:61px" width="20" height="28" viewBox="0 0 20 28"><path d="M1 1 H19 V20 a9 8 0 0 1-18 0 Z" fill="#000" stroke="#fff" stroke-width="1.2"/><path d="M1.6 19 H18.4 V20 a8.4 7.4 0 0 1-16.8 0 Z" fill="#ba0c2f"/><path d="M4 18 V10 a6 6 0 0 1 12 0 V18 M7 18 V11 M10 18 V11 M13 18 V11" fill="none" stroke="#fff" stroke-width="1.1"/></svg>
  <div class="a serif" style="left:43px;top:65px;color:#ba0c2f;font-size:7px;line-height:8px;white-space:nowrap;letter-spacing:-.18px;font-weight:bold">UNIVERSITY OF GEORGIA</div>
  <div class="a serif" style="left:42px;top:74px;color:#111;font-size:15.5px;line-height:16px;white-space:nowrap;letter-spacing:.1px">EXTENSION</div>
</div>
<div class="a card" style="left:280px;top:410px">
  <svg class="a" style="left:19px;top:61px" width="20" height="28" viewBox="0 0 20 28"><path d="M1 1 H19 V20 a9 8 0 0 1-18 0 Z" fill="#000" stroke="#fff" stroke-width="1.2"/><path d="M1.6 19 H18.4 V20 a8.4 7.4 0 0 1-16.8 0 Z" fill="#ba0c2f"/><path d="M4 18 V10 a6 6 0 0 1 12 0 V18 M7 18 V11 M10 18 V11 M13 18 V11" fill="none" stroke="#fff" stroke-width="1.1"/></svg>
  <div class="a serif" style="left:43px;top:65px;color:#eee;font-size:7px;line-height:8px;white-space:nowrap;letter-spacing:-.18px;font-weight:bold">UNIVERSITY OF GEORGIA</div>
    <div class="a serif" style="left:42px;top:74px;color:#eee;font-size:15.5px;line-height:16px;white-space:nowrap;letter-spacing:.1px">EXTENSION</div>
</div>
<div class="a card" style="left:440px;top:410px">
  <svg class="a" style="left:54px;top:20px" width="22" height="45" viewBox="0 0 22 45"><path d="M1 1 H21 V32 a10 10 0 0 1-20 0 Z" fill="#1a1a1a" stroke="#8a8a8a" stroke-width="1.4"/><path d="M2 27 H20 V32 a9 9 0 0 1-18 0 Z" fill="#9a1b35"/><path d="M6 26 V12 a5 5 0 0 1 10 0" fill="none" stroke="#bbb" stroke-width="1.3"/></svg>
  <div class="a serif" style="left:20px;top:73px;color:#1a1a1a;font-size:11px;line-height:12px;white-space:nowrap;font-weight:bold;letter-spacing:2.4px">UNIVE</div>
  <div class="a serif" style="left:19px;top:84px;color:#ba0c2f;font-size:25px;line-height:26px;white-space:nowrap;font-weight:bold">GEO</div>
  <div class="a" style="left:20px;top:108px;width:60px;height:1px;background:#111"></div>
  <div class="a serif" style="left:20px;top:113px;color:#111;font-size:18px;line-height:20px;white-space:nowrap">EXTE</div>
</div>
<div class="a" style="left:430px;top:410px;width:80px;height:150px;background:linear-gradient(90deg,rgba(37,38,39,0) 0%,rgba(37,38,39,0) 40%,rgba(37,38,39,.85) 100%)"></div>
<div class="a" style="left:510px;top:410px;width:30px;height:150px;background:#252627"></div>
<svg class="a" style="left:498px;top:475px" width="14" height="20" viewBox="0 0 14 20"><path d="M3 2 L11 10 L3 18" fill="none" stroke="#fff" stroke-width="1.8" stroke-linecap="round" stroke-linejoin="round"/></svg>

<!-- Colors -->
<div class="a pt" style="left:120px;top:596px;letter-spacing:-.6px">Colors</div>
<div class="a sa" style="left:461px;top:596px">See all</div>
<div class="a" style="left:120px;top:633px;color:#b4b5b7;font-weight:bold;font-size:15px;line-height:18px;white-space:nowrap;letter-spacing:.25px">UGA primary palette</div>
<div class="a" style="left:120px;top:660px;width:389px;height:50px;border-radius:4px;overflow:hidden;display:flex">
 <div style="flex:1;background:#000"></div><div style="flex:1;background:#ba0c2f"></div><div style="flex:1;background:#fff"></div>
</div>
<div class="a" style="left:120px;top:728px;color:#b4b5b7;font-weight:bold;font-size:15px;line-height:18px;white-space:nowrap;letter-spacing:.25px">UGA secondary palette</div>
<div class="a" style="left:120px;top:755px;width:389px;height:50px;border-radius:4px;overflow:hidden;display:flex">
 <div style="flex:1;background:#e4002b"></div><div style="flex:1;background:#00a3ad"></div><div style="flex:1;background:#b9bd16"></div><div style="flex:1;background:#004e60"></div><div style="flex:1;background:#554f47"></div><div style="flex:1;background:#5b4a24"></div><div style="flex:1;background:#66435a"></div><div style="flex:1;background:#a1a5a6"></div><div style="flex:1;background:#d6d2c4"></div><div style="flex:1;background:#c8d8ea"></div>
</div>

<!-- Fonts -->
<div class="a pt" style="left:120px;top:841px;letter-spacing:-.6px">Fonts</div>
<div class="a sa" style="left:461px;top:841px">See all</div>
<div class="a" style="left:120px;top:885px;width:389px;height:60px;border-radius:8px;background:#333436"></div>
<div class="a" style="left:140px;top:900px;color:#fff;font-weight:bold;font-size:36px;line-height:40px;white-space:nowrap;transform:scaleX(.83);transform-origin:0 0">Add a heading</div>

</div>
<!-- collapse handle -->
<svg class="a" style="left:539px;top:430px" width="18" height="134" viewBox="0 0 18 134"><path d="M0 0 C0 14 3 20 9 26 C14 31 16 35 16 44 V90 C16 99 14 103 9 108 C3 114 0 120 0 134 Z" fill="#252627"/><path d="M9 63 L6 66.5 L9 70" fill="none" stroke="#fff" stroke-width="1.5" stroke-linecap="round" stroke-linejoin="round"/></svg>
</body></html>
